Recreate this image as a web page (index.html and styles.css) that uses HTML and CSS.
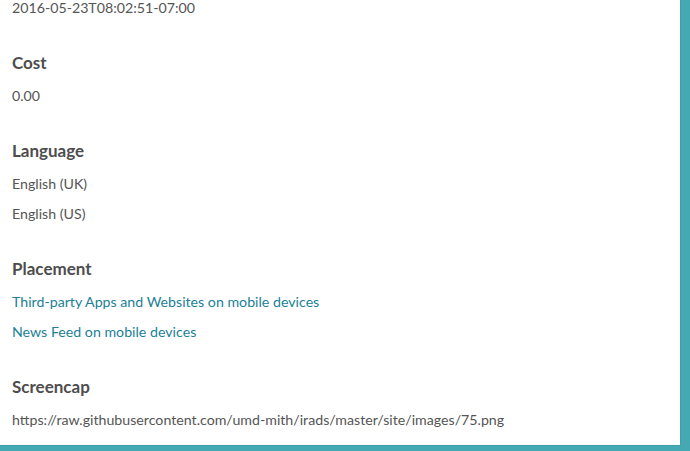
FILE: index.html
```html
<!DOCTYPE html>
<html>
<head>
<meta charset="utf-8">
<link rel="stylesheet" href="styles.css">
</head>
<body>
<div class="panel">
  <div class="content">
    <section class="field first">
      <div class="value">2016-05-23T08:02:51-07:00</div>
    </section>
    <section class="field">
      <h3 class="label">Cost</h3>
      <div class="value">0.00</div>
    </section>
    <section class="field">
      <h3 class="label">Language</h3>
      <div class="value">English (UK)</div>
      <div class="value">English (US)</div>
    </section>
    <section class="field">
      <h3 class="label">Placement</h3>
      <div class="value"><a class="link" href="#">Third-party Apps and Websites on mobile devices</a></div>
      <div class="value"><a class="link" href="#">News Feed on mobile devices</a></div>
    </section>
    <section class="field">
      <h3 class="label">Screencap</h3>
      <div class="value">https://raw.githubusercontent.com/umd-mith/irads/master/site/images/75.png</div>
    </section>
  </div>
</div>
</body>
</html>
```
FILE: styles.css
```css
html, body {
  margin: 0;
  padding: 0;
  height: 100%;
  overflow: hidden;
}
body {
  background: #45a9b3;
  font-family: Lato, "Liberation Sans", sans-serif;
  color: #555555;
}
.panel {
  width: 680px;
  height: 445px;
  background: #ffffff;
  box-shadow: 0 0 1px rgba(0,0,0,0.35);
  overflow: hidden;
}
.content {
  padding: 0 12px;
  display: flex;
  flex-direction: column;
  gap: 24px;
}
.field {
  display: flex;
  flex-direction: column;
}
.first .value {
  margin-top: -2px;
}
.label {
  margin: 0 0 12px 0;
  font-size: 17px;
  line-height: 22px;
  font-weight: 700;
  color: #4d4d4d;
}
.value {
  font-size: 14.2px;
  line-height: 20px;
  margin-bottom: 10px;
}
.link {
  color: #217f96;
  text-decoration: none;
}
```
